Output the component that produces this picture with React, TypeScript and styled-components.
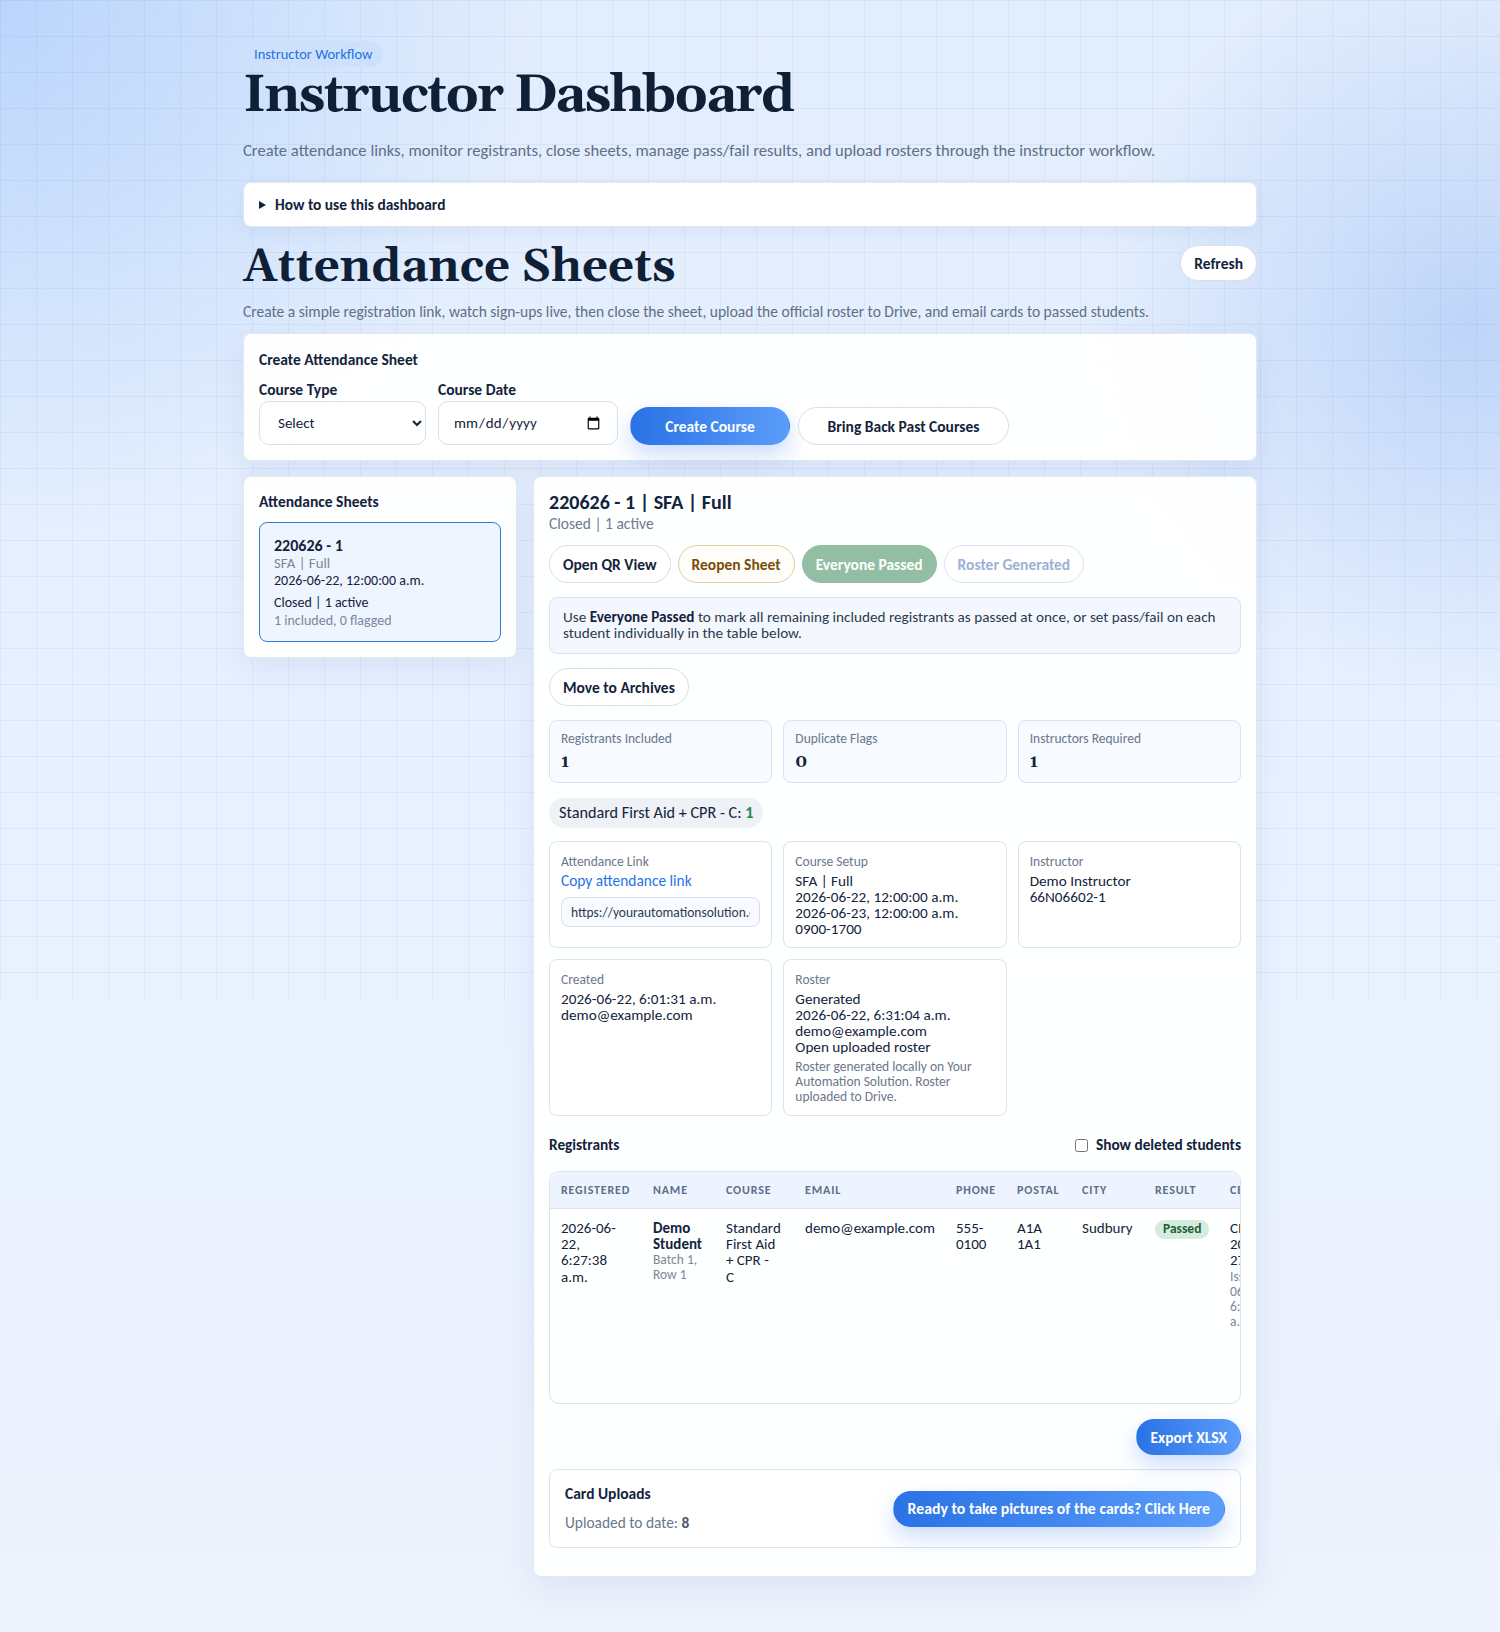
import styled, { createGlobalStyle, css } from "styled-components";

const sans = `Carlito, "Liberation Sans", Arial, sans-serif`;
const serif = `Gelasio, Georgia, "DejaVu Serif", serif`;

const GlobalStyle = createGlobalStyle`
  html, body {
    margin: 0;
    padding: 0;
  }

  body {
    font-family: ${sans};
    color: #13233b;
    background: #ecf2fd;
  }

  * {
    box-sizing: border-box;
  }
`;

const Page = styled.div`
  position: relative;
  min-height: 1632px;
  padding: 41px 0 56px;
  background:
    radial-gradient(circle at 0% 0%, rgba(184, 212, 252, 0.95) 0, rgba(184, 212, 252, 0) 540px),
    radial-gradient(circle at 98% 20%, rgba(186, 210, 248, 0.9) 0, rgba(186, 210, 248, 0) 380px),
    linear-gradient(180deg, #e2edfd 0%, #e8f1ff 55%, #edf2fc 100%);

  &::before {
    content: "";
    position: absolute;
    top: 0;
    left: 0;
    right: 0;
    height: 1000px;
    background-image:
      linear-gradient(rgba(40, 70, 130, 0.06) 1px, transparent 1px),
      linear-gradient(90deg, rgba(40, 70, 130, 0.06) 1px, transparent 1px);
    background-size: 36px 36px;
    pointer-events: none;
  }
`;

const Container = styled.div`
  position: relative;
  z-index: 1;
  width: 1014px;
  margin: 0 auto;
`;

const Eyebrow = styled.span`
  display: inline-block;
  padding: 4px 11px;
  border-radius: 999px;
  background: #cde1fd;
  color: #1f72df;
  font-size: 14.5px;
  line-height: 18px;
`;

const Title = styled.h1`
  margin: 1px 0 0;
  font-family: ${serif};
  font-size: 52px;
  line-height: 1.1;
  font-weight: 700;
  letter-spacing: -0.034em;
  color: #0f1f36;
`;

const Lead = styled.p`
  margin: 14px 0 0;
  font-size: 16.6px;
  line-height: 22px;
  color: #5f6f86;
`;

const Guide = styled.details`
  margin-top: 21px;
  background: #fff;
  border: 1px solid #e0e7f1;
  border-radius: 8px;
  box-shadow: 0 6px 18px rgba(40, 80, 150, 0.06);

  summary {
    padding: 0 15px;
    height: 43px;
    display: flex;
    align-items: center;
    gap: 9px;
    font-size: 15.4px;
    font-weight: 700;
    color: #13233b;
    cursor: pointer;
    list-style: none;
  }

  summary::before {
    content: "";
    border-left: 7px solid #13233b;
    border-top: 4px solid transparent;
    border-bottom: 4px solid transparent;
  }
`;

const SectionHead = styled.div`
  margin-top: 14px;
  display: flex;
  justify-content: space-between;
  align-items: flex-start;
`;

const SectionTitle = styled.h2`
  margin: 0;
  font-family: ${serif};
  font-size: 45.5px;
  line-height: 54px;
  font-weight: 700;
  color: #0f1f36;
`;

const SectionText = styled.p`
  margin: 7px 0 0;
  font-size: 15.5px;
  line-height: 20px;
  color: #5f6f86;
`;

type Tone = "default" | "primary" | "warn" | "success" | "muted";

const toneStyles: Record<Tone, ReturnType<typeof css>> = {
  default: css`
    background: #fff;
    border-color: #d9dfe8;
    color: #13233b;
  `,
  primary: css`
    background: linear-gradient(90deg, #2a72e6 0%, #5b9dfa 100%);
    border-color: transparent;
    color: #fff;
    box-shadow: 0 10px 22px rgba(52, 120, 235, 0.25);
  `,
  warn: css`
    background: #fffdf8;
    border-color: #e2cca4;
    color: #7b4d0c;
  `,
  success: css`
    background: #93bea4;
    border-color: #93bea4;
    color: #fff;
  `,
  muted: css`
    background: #fff;
    border-color: #d8e4f7;
    color: #9cb1d6;
  `,
};

const Button = styled.button<{ $tone?: Tone; $h?: number; $w?: number }>`
  height: ${({ $h }) => $h ?? 38}px;
  ${({ $w }) => $w && `width: ${$w}px;`}
  padding: 0 13px;
  border: 1px solid;
  border-radius: 999px;
  font-family: ${sans};
  font-size: 15.5px;
  font-weight: 700;
  white-space: nowrap;
  cursor: pointer;
  ${({ $tone = "default" }) => toneStyles[$tone]}
`;

const RefreshButton = styled(Button)`
  margin-top: 4px;
`;

const CtaButton = styled(Button)`
  padding: 0 14px;
  font-size: 15.8px;
`;

const Panel = styled.section`
  background: rgba(255, 255, 255, 0.95);
  border: 1px solid #e1e8f2;
  border-radius: 8px;
  box-shadow: 0 12px 32px rgba(40, 80, 150, 0.08);
  padding: 15px;
`;

const CreatePanel = styled(Panel)`
  margin-top: 11px;
  padding: 16px 15px 15px;
`;

const PanelTitle = styled.h3`
  margin: 0;
  font-size: 15.5px;
  font-weight: 700;
  line-height: 20px;
  color: #13233b;
`;

const FormRow = styled.div`
  margin-top: 10px;
  display: flex;
  align-items: flex-end;
  gap: 12px;
`;

const ButtonGroup = styled.div`
  display: flex;
  gap: 8px;
`;

const Field = styled.label`
  display: flex;
  flex-direction: column;
  gap: 2px;
  font-size: 15.5px;
  line-height: 19px;
  font-weight: 700;
  color: #13233b;
`;

const inputBase = css`
  height: 44px;
  border: 1px solid #d9dfe8;
  border-radius: 10px;
  background: #fff;
  font-family: ${sans};
  font-size: 15px;
  color: #13233b;
  padding: 0 14px;
`;

const Select = styled.select`
  ${inputBase}
  width: 167px;
`;

const DateInput = styled.input`
  ${inputBase}
  width: 180px;
`;

const Layout = styled.div`
  margin-top: 15px;
  display: grid;
  grid-template-columns: 274px minmax(0, 1fr);
  gap: 16px;
  align-items: start;
`;

const SheetCard = styled.div`
  margin-top: 10px;
  padding: 14px 14px 11px;
  border: 1px solid #2f79e6;
  border-radius: 8px;
  background: #eef5ff;
  font-size: 14px;
  line-height: 18px;
  color: #13233b;
`;

const SheetId = styled.div`
  font-size: 16px;
  line-height: 17px;
  font-weight: 700;
`;

const Muted = styled.div<{ $size?: number }>`
  color: #7b8799;
  font-size: ${({ $size }) => $size ?? 14}px;
`;

const Line = styled.div<{ $gap?: number }>`
  margin-top: ${({ $gap }) => $gap ?? 0}px;
`;

const DetailPanel = styled(Panel)`
  padding: 13px 15px 28px;
`;

const DetailTitle = styled.h3`
  margin: 0;
  font-size: 20px;
  font-weight: 700;
  line-height: 24px;
  color: #13233b;
`;

const Status = styled.div`
  font-size: 15.5px;
  line-height: 20px;
  color: #6e7a8c;
`;

const ButtonRow = styled.div`
  margin-top: 11px;
  display: flex;
  gap: 7px;
`;

const Notice = styled.div`
  margin-top: 14px;
  padding: 11px 13px 12px;
  border: 1px solid #d8e2f0;
  border-radius: 8px;
  background: #f4f8fe;
  font-size: 15.2px;
  line-height: 16px;
  color: #2b3a50;

  b {
    color: #13233b;
  }
`;

const Stack = styled.div<{ $gap?: number }>`
  margin-top: ${({ $gap }) => $gap ?? 14}px;
`;

const Grid3 = styled.div<{ $gap?: number }>`
  margin-top: ${({ $gap }) => $gap ?? 14}px;
  display: grid;
  grid-template-columns: repeat(3, 1fr);
  gap: 11px;
`;

const Stat = styled.div`
  height: 63px;
  padding: 10px 11px;
  border: 1px solid #dbe3ee;
  border-radius: 8px;
  background: #f7faff;
`;

const Label = styled.div`
  font-size: 13.5px;
  line-height: 16px;
  color: #6b778a;
`;

const StatValue = styled.div`
  margin-top: 5px;
  font-family: ${serif};
  font-weight: 700;
  font-size: 17px;
  line-height: 20px;
  color: #13233b;
`;

const Chip = styled.span`
  display: inline-block;
  margin-top: 15px;
  padding: 5px 10px;
  border-radius: 999px;
  background: #eef1f6;
  font-size: 16.2px;
  line-height: 20px;
  color: #13233b;

  b {
    color: #1f8a4c;
    font-weight: 700;
  }
`;

const InfoCard = styled.div<{ $h: number }>`
  height: ${({ $h }) => $h}px;
  padding: 12px 11px;
  border: 1px solid #dbe3ee;
  border-radius: 8px;
  background: #fff;
  font-size: 15.2px;
  line-height: 16px;
  color: #13233b;
`;

const CardBody = styled.div`
  margin-top: 3px;
`;

const LinkText = styled.a`
  display: block;
  margin-top: 3px;
  color: #1f73e8;
  font-size: 15.4px;
  text-decoration: none;
`;

const UrlInput = styled.input`
  margin-top: 8px;
  width: 100%;
  height: 30px;
  padding: 0 9px;
  border: 1px solid #d9dfe8;
  border-radius: 8px;
  background: #f7faff;
  font-family: ${sans};
  font-size: 13.5px;
  color: #2b3a50;
`;

const Note = styled.div`
  margin-top: 4px;
  font-size: 13.5px;
  line-height: 15px;
  color: #6b778a;
`;

const RegHead = styled.div`
  margin-top: 19px;
  display: flex;
  justify-content: space-between;
  align-items: center;
  font-size: 15.3px;
  line-height: 20px;
  font-weight: 700;
`;

const Check = styled.label`
  display: flex;
  align-items: center;
  gap: 8px;

  input {
    margin: 0;
    width: 13px;
    height: 13px;
  }
`;

const TableWrap = styled.div`
  margin-top: 16px;
  height: 233px;
  border: 1px solid #dbe3ee;
  border-radius: 10px;
  overflow: hidden;
`;

const Table = styled.table`
  table-layout: fixed;
  width: 780px;
  border-collapse: collapse;
  font-size: 15px;
  line-height: 16.3px;
  color: #13233b;

  td {
    padding: 11px 11px;
    vertical-align: top;
  }
`;

const Th = styled.th<{ $w: number }>`
  width: ${({ $w }) => $w}px;
  height: 36px;
  padding: 0 11px;
  background: #edf4ff;
  border-bottom: 1px solid #d8e2f0;
  text-align: left;
  font-size: 12px;
  font-weight: 600;
  letter-spacing: 0.07em;
  color: #5d6f8a;
  white-space: nowrap;
  overflow: hidden;
`;

const Badge = styled.span`
  display: inline-block;
  padding: 1px 8px 2px;
  border-radius: 999px;
  background: #d4ebdd;
  color: #1d5e39;
  font-size: 13.5px;
  font-weight: 700;
`;

const Sub = styled.div`
  color: #7b8799;
  font-size: 13.5px;
  line-height: 15px;
`;

const ExportRow = styled.div`
  margin-top: 15px;
  display: flex;
  justify-content: flex-end;
`;

const Uploads = styled.div`
  margin-top: 14px;
  padding: 14px 15px;
  border: 1px solid #dbe3ee;
  border-radius: 8px;
  background: #fff;
  display: flex;
  justify-content: space-between;
  align-items: center;
`;

const UploadCount = styled.div`
  margin-top: 9px;
  font-size: 15.4px;
  line-height: 20px;
  color: #6b778a;

  b {
    color: #4d5b70;
  }
`;

const columns = [
  { label: "REGISTERED", width: 92 },
  { label: "NAME", width: 73 },
  { label: "COURSE", width: 79 },
  { label: "EMAIL", width: 151 },
  { label: "PHONE", width: 61 },
  { label: "POSTAL", width: 65 },
  { label: "CITY", width: 73 },
  { label: "RESULT", width: 75 },
  { label: "CERTIFICATE", width: 111 },
];

const lines = (items: string[]) =>
  items.map((item, i) => (
    <span key={i}>
      {i > 0 && <br />}
      {item}
    </span>
  ));

export default function App() {
  return (
    <>
      <GlobalStyle />
      <Page>
        <Container>
          <Eyebrow>Instructor Workflow</Eyebrow>
          <Title>Instructor Dashboard</Title>
          <Lead>
            Create attendance links, monitor registrants, close sheets, manage pass/fail results, and
            upload rosters through the instructor workflow.
          </Lead>
          <Guide>
            <summary>How to use this dashboard</summary>
          </Guide>

          <SectionHead>
            <SectionTitle>Attendance Sheets</SectionTitle>
            <RefreshButton $h={36}>Refresh</RefreshButton>
          </SectionHead>
          <SectionText>
            Create a simple registration link, watch sign-ups live, then close the sheet, upload the
            official roster to Drive, and email cards to passed students.
          </SectionText>

          <CreatePanel>
            <PanelTitle>Create Attendance Sheet</PanelTitle>
            <FormRow>
              <Field>
                Course Type
                <Select defaultValue="">
                  <option value="">Select</option>
                  <option value="sfa">Standard First Aid + CPR - C</option>
                </Select>
              </Field>
              <Field>
                Course Date
                <DateInput type="date" />
              </Field>
              <ButtonGroup>
                <Button $tone="primary" $w={160}>Create Course</Button>
                <Button $w={211}>Bring Back Past Courses</Button>
              </ButtonGroup>
            </FormRow>
          </CreatePanel>

          <Layout>
            <Panel>
              <PanelTitle>Attendance Sheets</PanelTitle>
              <SheetCard>
                <SheetId>220626 - 1</SheetId>
                <Muted $size={14.8}>SFA | Full</Muted>
                <Line>2026-06-22, 12:00:00 a.m.</Line>
                <Line $gap={4}>Closed | 1 active</Line>
                <Muted>1 included, 0 flagged</Muted>
              </SheetCard>
            </Panel>

            <DetailPanel>
              <DetailTitle>220626 - 1 | SFA | Full</DetailTitle>
              <Status>Closed | 1 active</Status>
              <ButtonRow>
                <Button>Open QR View</Button>
                <Button $tone="warn">Reopen Sheet</Button>
                <Button $tone="success">Everyone Passed</Button>
                <Button $tone="muted">Roster Generated</Button>
              </ButtonRow>
              <Notice>
                Use <b>Everyone Passed</b> to mark all remaining included registrants as passed at once,
                or set pass/fail on each student individually in the table below.
              </Notice>
              <Stack>
                <Button>Move to Archives</Button>
              </Stack>

              <Grid3>
                <Stat>
                  <Label>Registrants Included</Label>
                  <StatValue>1</StatValue>
                </Stat>
                <Stat>
                  <Label>Duplicate Flags</Label>
                  <StatValue>0</StatValue>
                </Stat>
                <Stat>
                  <Label>Instructors Required</Label>
                  <StatValue>1</StatValue>
                </Stat>
              </Grid3>

              <Chip>
                Standard First Aid + CPR - C: <b>1</b>
              </Chip>

              <Grid3 $gap={13}>
                <InfoCard $h={107}>
                  <Label>Attendance Link</Label>
                  <LinkText href="#">Copy attendance link</LinkText>
                  <UrlInput readOnly value="https://yourautomationsolution.com/attend/220626-1" />
                </InfoCard>
                <InfoCard $h={107}>
                  <Label>Course Setup</Label>
                  <CardBody>
                    {lines(["SFA | Full", "2026-06-22, 12:00:00 a.m.", "2026-06-23, 12:00:00 a.m.", "0900-1700"])}
                  </CardBody>
                </InfoCard>
                <InfoCard $h={107}>
                  <Label>Instructor</Label>
                  <CardBody>{lines(["Demo Instructor", "66N06602-1"])}</CardBody>
                </InfoCard>
                <InfoCard $h={157}>
                  <Label>Created</Label>
                  <CardBody>{lines(["2026-06-22, 6:01:31 a.m.", "demo@example.com"])}</CardBody>
                </InfoCard>
                <InfoCard $h={157}>
                  <Label>Roster</Label>
                  <CardBody>
                    {lines(["Generated", "2026-06-22, 6:31:04 a.m.", "demo@example.com", "Open uploaded roster"])}
                  </CardBody>
                  <Note>
                    Roster generated locally on Your Automation Solution. Roster uploaded to Drive.
                  </Note>
                </InfoCard>
              </Grid3>

              <RegHead>
                <span>Registrants</span>
                <Check>
                  <input type="checkbox" />
                  Show deleted students
                </Check>
              </RegHead>

              <TableWrap>
                <Table>
                  <thead>
                    <tr>
                      {columns.map((c) => (
                        <Th key={c.label} $w={c.width}>
                          {c.label}
                        </Th>
                      ))}
                    </tr>
                  </thead>
                  <tbody>
                    <tr>
                      <td>{lines(["2026-06-", "22,", "6:27:38", "a.m."])}</td>
                      <td>
                        <b>{lines(["Demo", "Student"])}</b>
                        <Sub>{lines(["Batch 1,", "Row 1"])}</Sub>
                      </td>
                      <td>{lines(["Standard", "First Aid", "+ CPR -", "C"])}</td>
                      <td>demo@example.com</td>
                      <td>{lines(["555-", "0100"])}</td>
                      <td>{lines(["A1A", "1A1"])}</td>
                      <td>Sudbury</td>
                      <td>
                        <Badge>Passed</Badge>
                      </td>
                      <td>
                        {lines(["CI-", "2026-", "27"])}
                        <Sub>{lines(["Issued", "06-22,", "6:31", "a.m."])}</Sub>
                      </td>
                    </tr>
                  </tbody>
                </Table>
              </TableWrap>

              <ExportRow>
                <Button $tone="primary" $h={36}>Export XLSX</Button>
              </ExportRow>

              <Uploads>
                <div>
                  <PanelTitle>Card Uploads</PanelTitle>
                  <UploadCount>
                    Uploaded to date: <b>8</b>
                  </UploadCount>
                </div>
                <CtaButton $tone="primary" $h={36}>Ready to take pictures of the cards? Click Here</CtaButton>
              </Uploads>
            </DetailPanel>
          </Layout>
        </Container>
      </Page>
    </>
  );
}
